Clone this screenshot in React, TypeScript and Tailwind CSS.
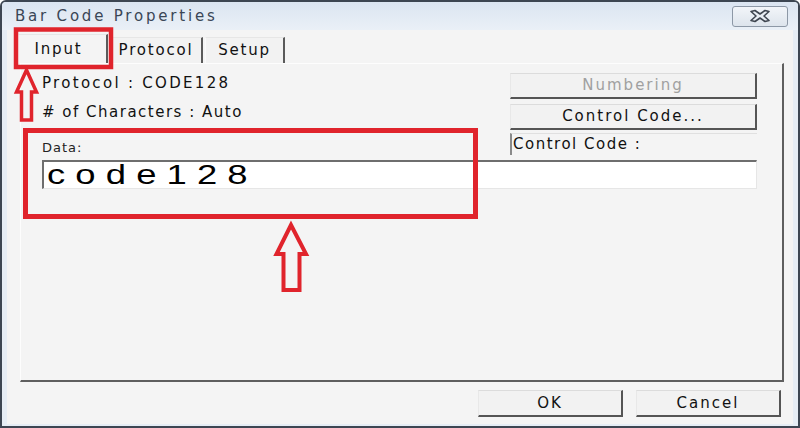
import React from "react";

const ui = { fontFamily: '"DejaVu Sans", "Liberation Sans", sans-serif' };

function Btn({ children, disabled, className }: { children: React.ReactNode; disabled?: boolean; className?: string }) {
  return (
    <div
      className={
        "flex items-center justify-center bg-[#f2f2f2] border-t border-l border-t-[#dcdcdc] border-l-[#e8e8e8] border-r-2 border-b-2 border-r-[#555] border-b-[#555] text-[15px] tracking-[2px] " +
        (disabled ? "text-[#a0a0a0] " : "text-[#111] ") +
        (className || "")
      }
      style={ui}
    >
      {children}
    </div>
  );
}

function Tab({ label, selected, w }: { label: string; selected?: boolean; w: string }) {
  return (
    <div
      className={
        "flex items-center justify-center border-t border-l border-t-[#e6e6e6] border-l-[#fafafa] border-r-2 border-r-[#5a5a5a] text-[15px] tracking-[1.8px] text-[#111] " +
        (selected ? "h-[29px] bg-[#f4f4f4] pr-[8px] " : "h-[26px] bg-[#f2f2f2] ") +
        w
      }
      style={ui}
    >
      {label}
    </div>
  );
}

export default function App() {
  return (
    <div className="relative w-[800px] h-[428px] overflow-hidden bg-[#e6edf5] border-2 border-[#3d4652] rounded-t-[6px] flex flex-col">
      {/* Title bar */}
      <div className="h-[28px] shrink-0 flex items-center justify-between pl-[13px] pr-[8px] bg-gradient-to-b from-[#dbe5f1] to-[#eaf0f7]">
        <span className="text-[15px] tracking-[2.8px] text-[#3a4656] mt-[1px]" style={ui}>
          Bar Code Properties
        </span>
        <div className="w-[56px] h-[21px] rounded-[3px] border border-[#8d98a6] bg-gradient-to-b from-[#f2f5f9] to-[#dde4ec] flex items-center justify-center mr-[2px]">
          <svg width="24" height="14" viewBox="0 0 24 14">
            <path
              d="M3 2.5 L7 1.5 L12 5 L17 1.5 L21 2.5 L16 7 L21 11.5 L17 12.5 L12 9 L7 12.5 L3 11.5 L8 7 Z"
              fill="#e8edf3"
              stroke="#3f4650"
              strokeWidth="1.6"
              strokeLinejoin="round"
            />
          </svg>
        </div>
      </div>

      {/* Client area */}
      <div className="flex-1 mx-[5px] mb-[2px] bg-[#f4f4f4] flex flex-col pt-[3px] pl-[11px] pr-[9px]">
        {/* Tabs */}
        <div className="flex items-end h-[30px] shrink-0">
          <Tab label="Input" selected w="w-[90px]" />
          <div className="w-[2px]" />
          <Tab label="Protocol" w="w-[93px]" />
          <div className="w-[2px]" />
          <Tab label="Setup" w="w-[80px]" />
        </div>

        {/* Panel */}
        <div className="ml-[2px] h-[319px] shrink-0 border-t border-l border-t-[#fdfdfd] border-l-[#fdfdfd] border-r-2 border-b-2 border-r-[#5f5f5f] border-b-[#5f5f5f] pl-[21px] pr-[25px] pt-[9px]">
          <div className="grid grid-cols-[1fr_247px]">
            <div className="flex flex-col text-[15px] text-[#111]" style={ui}>
              <div className="h-[20px] leading-[20px] tracking-[2.3px]">Protocol : CODE128</div>
              <div className="h-[20px] leading-[20px] mt-[9px] tracking-[1.5px]">
                # of Characters : Auto
              </div>
              <div className="h-[16px] leading-[16px] mt-[18px] text-[13px] tracking-[1px] text-[#222]">
                Data:
              </div>
            </div>
            <div className="flex flex-col">
              <Btn disabled className="h-[26px]">Numbering</Btn>
              <Btn className="h-[26px] mt-[5px]">Control Code...</Btn>
              <div
                className="h-[22px] mt-[3px] border-t border-t-[#e0e0e0] border-l-2 border-l-[#8a8a8a] pl-[1px] text-[15px] leading-[20px] tracking-[1.5px] text-[#111]"
                style={ui}
              >
                Control Code :
              </div>
            </div>
          </div>
          <div className="mt-[4px] h-[29px] bg-white border-t-2 border-l-2 border-t-[#6e6e6e] border-l-[#6e6e6e] border-b border-r border-b-[#e6e6e6] border-r-[#e6e6e6] flex items-center pl-[3px] overflow-hidden">
            <span
              className="inline-block origin-left scale-x-[1.35] text-[27px] leading-[29px] tracking-[7.5px] text-black"
              style={{ fontFamily: '"Liberation Sans", Arial, sans-serif' }}
            >
              code128
            </span>
          </div>
        </div>

        {/* Bottom buttons */}
        <div className="flex justify-end gap-[13px] mt-[8px] pr-[3px]">
          <Btn className="w-[145px] h-[27px]">OK</Btn>
          <Btn className="w-[145px] h-[27px]">Cancel</Btn>
        </div>
      </div>

      {/* Red annotations overlay */}
      <svg className="absolute left-[-2px] top-[-2px] pointer-events-none" width="800" height="428" viewBox="0 0 800 428">
        <rect x="16" y="29.5" width="95" height="37.5" fill="none" stroke="#e0242c" strokeWidth="4.5" />
        <rect x="25.5" y="130.5" width="450" height="86" fill="none" stroke="#e0242c" strokeWidth="5" />
        <polygon
          points="26.5,70 16.5,92 21.5,92 21.5,120 31.5,120 31.5,92 36.5,92"
          fill="none"
          stroke="#e0242c"
          strokeWidth="3.5"
          strokeLinejoin="miter"
        />
        <polygon
          points="291,225 276.5,254 283.5,254 283.5,290 299.5,290 299.5,254 306,254"
          fill="none"
          stroke="#e0242c"
          strokeWidth="4"
          strokeLinejoin="miter"
        />
      </svg>
    </div>
  );
}
